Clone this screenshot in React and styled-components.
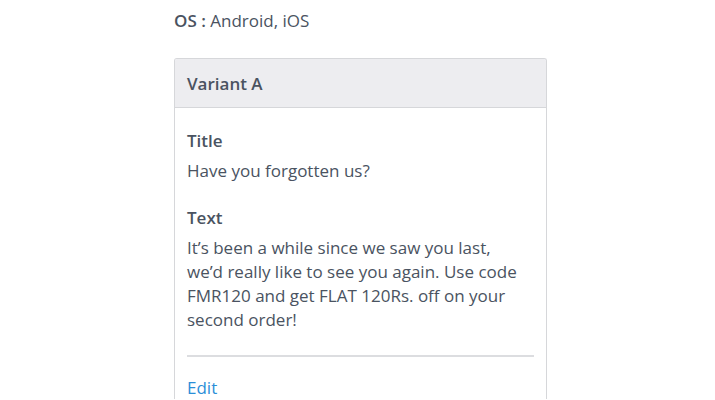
import React from "react";
import styled, { createGlobalStyle } from "styled-components";

const GlobalStyle = createGlobalStyle`
  body {
    margin: 0;
    background: #ffffff;
    font-family: "Open Sans", Lato, sans-serif;
    color: #4a5361;
  }
`;

const Page = styled.div`
  padding: 8px 0 0 174px;
  width: 373px;
`;

const Meta = styled.div`
  font-size: 17px;
  line-height: 26px;
  margin-bottom: 24px;
`;

const MetaKey = styled.span`
  font-weight: 600;
`;

const Card = styled.div`
  border: 1px solid #d6d7da;
  border-bottom: 0;
  border-radius: 3px 3px 0 0;
  overflow: hidden;
`;

const CardHeader = styled.div`
  background: #ededf0;
  border-bottom: 1px solid #d6d7da;
  padding: 0 12px;
  height: 48px;
  display: flex;
  align-items: center;
  font-size: 17px;
  font-weight: 600;
`;

const CardBody = styled.div`
  padding: 21px 12px 0 12px;
`;

const Field = styled.div`
  margin-bottom: 23px;
`;

const Label = styled.div`
  font-size: 17px;
  line-height: 24px;
  font-weight: 600;
  margin-bottom: 6px;
`;

const Value = styled.div`
  font-size: 17px;
  line-height: 24px;
  max-width: 335px;
`;

const Divider = styled.hr`
  border: 0;
  border-top: 2px solid #dcdde0;
  margin: 0 0 20px 0;
`;

const EditLink = styled.a`
  display: block;
  font-size: 17px;
  line-height: 22px;
  color: #2b8ed8;
  text-decoration: none;
`;

export default function App() {
  return (
    <>
      <GlobalStyle />
      <Page>
        <Meta>
          <MetaKey>OS :</MetaKey> Android, iOS
        </Meta>
        <Card>
          <CardHeader>Variant A</CardHeader>
          <CardBody>
            <Field>
              <Label>Title</Label>
              <Value>Have you forgotten us?</Value>
            </Field>
            <Field>
              <Label>Text</Label>
              <Value>
                It’s been a while since we saw you last, we’d really like to see
                you again. Use code FMR120 and get FLAT 120Rs. off on your
                second order!
              </Value>
            </Field>
            <Divider />
            <EditLink href="#">Edit</EditLink>
          </CardBody>
        </Card>
      </Page>
    </>
  );
}
